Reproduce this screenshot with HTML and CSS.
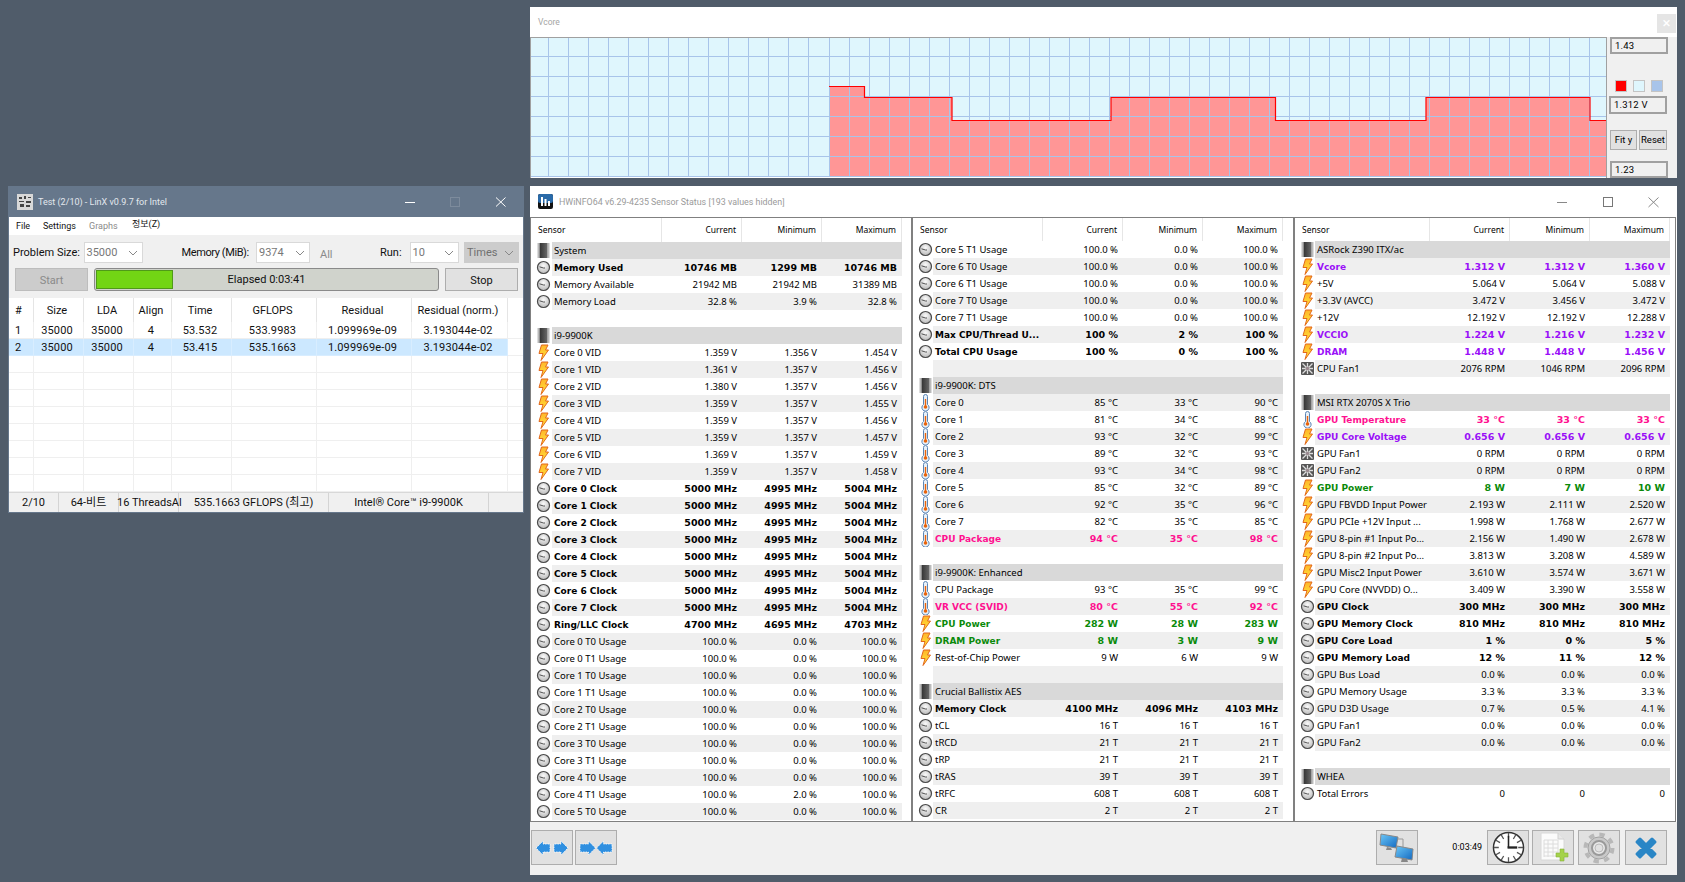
FILE: index.html
```html
<!DOCTYPE html>
<html lang="en">
<head>
<meta charset="utf-8">
<title>LinX and HWiNFO64</title>
<link rel="stylesheet" href="styles.css">
</head>
<body>
<svg class="defs" width="0" height="0" aria-hidden="true">
  <defs>
    <radialGradient id="gaugeFill" cx="50%" cy="35%" r="70%"><stop offset="0" stop-color="#fafafa"/><stop offset="1" stop-color="#b5b5b5"/></radialGradient>
    <linearGradient id="chipFill" x1="0" x2="1" y1="0" y2="0"><stop offset="0" stop-color="#333"/><stop offset="1" stop-color="#6a6a6a"/></linearGradient>
    <linearGradient id="boltFill" x1="0" x2="0" y1="0" y2="1"><stop offset="0" stop-color="#ffb52a"/><stop offset="1" stop-color="#ffe93a"/></linearGradient>
    <linearGradient id="blueFill" x1="0" x2="1" y1="0" y2="1"><stop offset="0" stop-color="#6cc8f8"/><stop offset="1" stop-color="#1268c0"/></linearGradient>
    <symbol id="g" viewBox="0 0 17 17"><circle cx="8.500" cy="8.500" r="6" fill="url(#gaugeFill)" stroke="#4a4a4a" stroke-width="1.200"/><path d="M4.500 7.800L8.500 9H10" fill="none" stroke="#555" stroke-width="1"/></symbol>
    <symbol id="b" viewBox="0 0 17 17"><path d="M6.500 1H13L10.500 6H13.500L6 16.500L8 9.500H4Z" fill="url(#boltFill)" stroke="#e2681c" stroke-width="1" stroke-linejoin="round"/></symbol>
    <symbol id="c" viewBox="0 0 17 17"><rect x="4.500" y="1" width="8" height="15" fill="url(#chipFill)"/><path d="M3.500 1.500V16M13.500 1.500V16" stroke="#777" stroke-width="2" stroke-dasharray="1 1" fill="none"/></symbol>
    <symbol id="t" viewBox="0 0 17 17"><path d="M6.500 2.500a2 2 0 0 1 4 0V10.500a3.600 3.600 0 1 1-4 0Z" fill="#e8f0f8" stroke="#5a84b5" stroke-width="1"/><path d="M8.500 5V13" stroke="#e8640c" stroke-width="1.400"/><circle cx="8.500" cy="13" r="1.800" fill="#e8640c"/></symbol>
    <symbol id="f" viewBox="0 0 17 17"><rect x="2" y="2" width="13" height="13" rx="1" fill="#555"/><path d="M3.500 3.500L13.500 13.500M13.500 3.500L3.500 13.500M8.500 3V14M3 8.500H14" stroke="#ddd" stroke-width="1.300"/><circle cx="8.500" cy="8.500" r="1.800" fill="#9a8a90"/></symbol>
  </defs>
</svg>

<main class="desktop">

  <section class="win vwin">
    <div class="vtitle">Vcore</div>
    <button class="vclose">×</button>
    <div class="vbody">
      <div class="chart">
        <svg class="chart-svg" width="1075" height="139" viewBox="0 0 1075 139">
          <defs>
            <pattern id="gridA" x="17" y="18" width="20" height="20" patternUnits="userSpaceOnUse"><path d="M0 0H20V1H1V20H0Z" fill="#a8c4ea"/></pattern>
            <pattern id="gridB" x="318" y="18" width="20" height="20" patternUnits="userSpaceOnUse"><path d="M0 0H20V1H1V20H0Z" fill="#a8c4ea"/></pattern>
          </defs>
          <rect width="1075" height="139" fill="#dff6fd"/>
          <path d="M298 139V48.500H333.500V59.500H421V82.500H580V59.500H744.500V82.500H895V59.500H1059V82.500H1075V139Z" fill="#ff9696"/>
          <rect x="0" width="297" height="139" fill="url(#gridA)"/>
          <rect x="297" width="778" height="139" fill="url(#gridB)"/>
          <path d="M298 48.500H333.500V59.500H421V82.500H580V59.500H744.500V82.500H895V59.500H1059V82.500H1075" fill="none" stroke="#f00" stroke-width="1.200"/>
        </svg>
      </div>
      <div class="vside">
        <div class="vbox vtop">1.43</div>
        <div class="swatches"><i class="sw red"></i><i class="sw pale"></i><i class="sw blue"></i></div>
        <div class="vbox vcur">1.312 V</div>
        <div class="vbtns"><button class="btn fit">Fit y</button><button class="btn reset">Reset</button></div>
        <div class="vbox vlow">1.23</div>
      </div>
    </div>
  </section>

  <section class="win lx">
    <header class="lx-title">
      <svg class="lx-icon" width="16" height="16" viewBox="0 0 16 16"><rect width="16" height="16" fill="#d8d8d8"/><path d="M2 3h3v2H2zM7 2h2v3H7zM11 3h3v1h-3zM2 7h5v1H2zM9 7h5v2H9zM3 10h4v3H3zM9 11h4v2H9z" fill="#444"/></svg>
      <span class="lx-name">Test (2/10) - LinX v0.9.7 for Intel</span>
      <svg class="wc" width="101" height="12" viewBox="0 0 101 12"><path d="M0 6.500H10" stroke="#fff"/><rect x="45.500" y="1.500" width="9" height="9" fill="none" stroke="#7d8b9c"/><path d="M91 1.500L100.500 10.500M100.500 1.500L91 10.500" stroke="#fff"/></svg>
    </header>
    <nav class="lx-menu"><span>File</span><span>Settings</span><span class="dim">Graphs</span><span class="ko">정보(Z)</span></nav>
    <div class="lx-controls">
      <div class="lx-row1">
        <label class="l-ps">Problem Size:</label>
        <div class="sel s-ps">35000<svg class="chev" width="10" height="6" viewBox="0 0 10 6"><path d="M1 1L5 5L9 1" fill="none" stroke="#888"/></svg></div>
        <label class="l-mem">Memory (MiB):</label>
        <div class="sel s-mem">9374<svg class="chev" width="10" height="6" viewBox="0 0 10 6"><path d="M1 1L5 5L9 1" fill="none" stroke="#888"/></svg></div>
        <span class="all">All</span>
        <label class="l-run">Run:</label>
        <div class="sel s-run">10<svg class="chev" width="10" height="6" viewBox="0 0 10 6"><path d="M1 1L5 5L9 1" fill="none" stroke="#888"/></svg></div>
        <div class="sel s-times">Times<svg class="chev" width="10" height="6" viewBox="0 0 10 6"><path d="M1 1L5 5L9 1" fill="none" stroke="#888"/></svg></div>
      </div>
      <div class="lx-row2">
        <button class="start">Start</button>
        <div class="progress"><div class="fill" style="width:22.6%"></div><span class="ptext">Elapsed 0:03:41</span></div>
        <button class="stop">Stop</button>
      </div>
    </div>
    <table class="res">
      <colgroup><col class="c0"><col class="c1"><col class="c2"><col class="c3"><col class="c4"><col class="c5"><col class="c6"><col class="c7"><col></colgroup>
      <thead><tr><th class="hash">#</th><th>Size</th><th>LDA</th><th>Align</th><th>Time</th><th>GFLOPS</th><th>Residual</th><th>Residual (norm.)</th><th></th></tr></thead>
      <tbody>
        <tr><td class="hash">1</td><td>35000</td><td>35000</td><td>4</td><td>53.532</td><td>533.9983</td><td>1.099969e-09</td><td>3.193044e-02</td><td class="tail"></td></tr>
        <tr class="sel-row"><td class="hash">2</td><td>35000</td><td>35000</td><td>4</td><td>53.415</td><td>535.1663</td><td>1.099969e-09</td><td>3.193044e-02</td><td class="tail"></td></tr>
        <tr><td></td><td></td><td></td><td></td><td></td><td></td><td></td><td></td><td></td></tr>
        <tr><td></td><td></td><td></td><td></td><td></td><td></td><td></td><td></td><td></td></tr>
        <tr><td></td><td></td><td></td><td></td><td></td><td></td><td></td><td></td><td></td></tr>
        <tr><td></td><td></td><td></td><td></td><td></td><td></td><td></td><td></td><td></td></tr>
        <tr><td></td><td></td><td></td><td></td><td></td><td></td><td></td><td></td><td></td></tr>
        <tr><td></td><td></td><td></td><td></td><td></td><td></td><td></td><td></td><td></td></tr>
        <tr><td></td><td></td><td></td><td></td><td></td><td></td><td></td><td></td><td></td></tr>
        <tr><td></td><td></td><td></td><td></td><td></td><td></td><td></td><td></td><td></td></tr>
      </tbody>
    </table>
    <footer class="lx-status">
      <span class="st1">2/10</span><span class="st2">64-비트</span><span class="st3">16 ThreadsAl</span><span class="st4">535.1663 GFLOPS (최고)</span><span class="st5">Intel® Core™ i9-9900K</span><span class="st6"></span>
    </footer>
  </section>

  <section class="win hw">
    <header class="hw-title">
      <svg class="hw-icon" width="15" height="15" viewBox="0 0 15 15"><rect width="15" height="15" rx="2" fill="#111"/><rect width="15" height="9" rx="2" fill="#2a6aa8"/><path d="M3 3h2v9H3zM6.500 5h2v7h-2zM10 7h2v5h-2z" fill="#fff"/></svg>
      <span class="hw-name">HWiNFO64 v6.29-4235 Sensor Status [193 values hidden]</span>
      <svg class="wc hw-wc" width="103" height="12" viewBox="0 0 103 12"><path d="M0 6.500H10" stroke="#888"/><rect x="46.500" y="1.500" width="9" height="9" fill="none" stroke="#777"/><path d="M91.500 1.500L101.500 11M101.500 1.500L91.500 11" stroke="#888"/></svg>
    </header>
    <div class="panels">

      <div class="panel p1">
        <div class="phead"><span>Sensor</span><span>Current</span><span>Minimum</span><span>Maximum</span></div>
        <div class="rows">
          <div class="row grp"><svg class="ic"><use href="#c"/></svg><span class="full">System</span></div>
          <div class="row bold"><svg class="ic"><use href="#g"/></svg><span>Memory Used</span><span>10746 MB</span><span>1299 MB</span><span>10746 MB</span></div>
          <div class="row"><svg class="ic"><use href="#g"/></svg><span>Memory Available</span><span>21942 MB</span><span>21942 MB</span><span>31389 MB</span></div>
          <div class="row"><svg class="ic"><use href="#g"/></svg><span>Memory Load</span><span>32.8 %</span><span>3.9 %</span><span>32.8 %</span></div>
          <div class="row"><span class="full blank"></span></div>
          <div class="row grp"><svg class="ic"><use href="#c"/></svg><span class="full">i9-9900K</span></div>
          <div class="row"><svg class="ic"><use href="#b"/></svg><span>Core 0 VID</span><span>1.359 V</span><span>1.356 V</span><span>1.454 V</span></div>
          <div class="row"><svg class="ic"><use href="#b"/></svg><span>Core 1 VID</span><span>1.361 V</span><span>1.357 V</span><span>1.456 V</span></div>
          <div class="row"><svg class="ic"><use href="#b"/></svg><span>Core 2 VID</span><span>1.380 V</span><span>1.357 V</span><span>1.456 V</span></div>
          <div class="row"><svg class="ic"><use href="#b"/></svg><span>Core 3 VID</span><span>1.359 V</span><span>1.357 V</span><span>1.455 V</span></div>
          <div class="row"><svg class="ic"><use href="#b"/></svg><span>Core 4 VID</span><span>1.359 V</span><span>1.357 V</span><span>1.456 V</span></div>
          <div class="row"><svg class="ic"><use href="#b"/></svg><span>Core 5 VID</span><span>1.359 V</span><span>1.357 V</span><span>1.457 V</span></div>
          <div class="row"><svg class="ic"><use href="#b"/></svg><span>Core 6 VID</span><span>1.369 V</span><span>1.357 V</span><span>1.459 V</span></div>
          <div class="row"><svg class="ic"><use href="#b"/></svg><span>Core 7 VID</span><span>1.359 V</span><span>1.357 V</span><span>1.458 V</span></div>
          <div class="row bold"><svg class="ic"><use href="#g"/></svg><span>Core 0 Clock</span><span>5000 MHz</span><span>4995 MHz</span><span>5004 MHz</span></div>
          <div class="row bold"><svg class="ic"><use href="#g"/></svg><span>Core 1 Clock</span><span>5000 MHz</span><span>4995 MHz</span><span>5004 MHz</span></div>
          <div class="row bold"><svg class="ic"><use href="#g"/></svg><span>Core 2 Clock</span><span>5000 MHz</span><span>4995 MHz</span><span>5004 MHz</span></div>
          <div class="row bold"><svg class="ic"><use href="#g"/></svg><span>Core 3 Clock</span><span>5000 MHz</span><span>4995 MHz</span><span>5004 MHz</span></div>
          <div class="row bold"><svg class="ic"><use href="#g"/></svg><span>Core 4 Clock</span><span>5000 MHz</span><span>4995 MHz</span><span>5004 MHz</span></div>
          <div class="row bold"><svg class="ic"><use href="#g"/></svg><span>Core 5 Clock</span><span>5000 MHz</span><span>4995 MHz</span><span>5004 MHz</span></div>
          <div class="row bold"><svg class="ic"><use href="#g"/></svg><span>Core 6 Clock</span><span>5000 MHz</span><span>4995 MHz</span><span>5004 MHz</span></div>
          <div class="row bold"><svg class="ic"><use href="#g"/></svg><span>Core 7 Clock</span><span>5000 MHz</span><span>4995 MHz</span><span>5004 MHz</span></div>
          <div class="row bold"><svg class="ic"><use href="#g"/></svg><span>Ring/LLC Clock</span><span>4700 MHz</span><span>4695 MHz</span><span>4703 MHz</span></div>
          <div class="row"><svg class="ic"><use href="#g"/></svg><span>Core 0 T0 Usage</span><span>100.0 %</span><span>0.0 %</span><span>100.0 %</span></div>
          <div class="row"><svg class="ic"><use href="#g"/></svg><span>Core 0 T1 Usage</span><span>100.0 %</span><span>0.0 %</span><span>100.0 %</span></div>
          <div class="row"><svg class="ic"><use href="#g"/></svg><span>Core 1 T0 Usage</span><span>100.0 %</span><span>0.0 %</span><span>100.0 %</span></div>
          <div class="row"><svg class="ic"><use href="#g"/></svg><span>Core 1 T1 Usage</span><span>100.0 %</span><span>0.0 %</span><span>100.0 %</span></div>
          <div class="row"><svg class="ic"><use href="#g"/></svg><span>Core 2 T0 Usage</span><span>100.0 %</span><span>0.0 %</span><span>100.0 %</span></div>
          <div class="row"><svg class="ic"><use href="#g"/></svg><span>Core 2 T1 Usage</span><span>100.0 %</span><span>0.0 %</span><span>100.0 %</span></div>
          <div class="row"><svg class="ic"><use href="#g"/></svg><span>Core 3 T0 Usage</span><span>100.0 %</span><span>0.0 %</span><span>100.0 %</span></div>
          <div class="row"><svg class="ic"><use href="#g"/></svg><span>Core 3 T1 Usage</span><span>100.0 %</span><span>0.0 %</span><span>100.0 %</span></div>
          <div class="row"><svg class="ic"><use href="#g"/></svg><span>Core 4 T0 Usage</span><span>100.0 %</span><span>0.0 %</span><span>100.0 %</span></div>
          <div class="row"><svg class="ic"><use href="#g"/></svg><span>Core 4 T1 Usage</span><span>100.0 %</span><span>2.0 %</span><span>100.0 %</span></div>
          <div class="row"><svg class="ic"><use href="#g"/></svg><span>Core 5 T0 Usage</span><span>100.0 %</span><span>0.0 %</span><span>100.0 %</span></div>
        </div>
      </div>

      <div class="panel p2">
        <div class="phead"><span>Sensor</span><span>Current</span><span>Minimum</span><span>Maximum</span></div>
        <div class="rows">
          <div class="row"><svg class="ic"><use href="#g"/></svg><span>Core 5 T1 Usage</span><span>100.0 %</span><span>0.0 %</span><span>100.0 %</span></div>
          <div class="row"><svg class="ic"><use href="#g"/></svg><span>Core 6 T0 Usage</span><span>100.0 %</span><span>0.0 %</span><span>100.0 %</span></div>
          <div class="row"><svg class="ic"><use href="#g"/></svg><span>Core 6 T1 Usage</span><span>100.0 %</span><span>0.0 %</span><span>100.0 %</span></div>
          <div class="row"><svg class="ic"><use href="#g"/></svg><span>Core 7 T0 Usage</span><span>100.0 %</span><span>0.0 %</span><span>100.0 %</span></div>
          <div class="row"><svg class="ic"><use href="#g"/></svg><span>Core 7 T1 Usage</span><span>100.0 %</span><span>0.0 %</span><span>100.0 %</span></div>
          <div class="row bold"><svg class="ic"><use href="#g"/></svg><span>Max CPU/Thread U...</span><span>100 %</span><span>2 %</span><span>100 %</span></div>
          <div class="row bold"><svg class="ic"><use href="#g"/></svg><span>Total CPU Usage</span><span>100 %</span><span>0 %</span><span>100 %</span></div>
          <div class="row"><span class="full blank"></span></div>
          <div class="row grp"><svg class="ic"><use href="#c"/></svg><span class="full">i9-9900K: DTS</span></div>
          <div class="row"><svg class="ic"><use href="#t"/></svg><span>Core 0</span><span>85 °C</span><span>33 °C</span><span>90 °C</span></div>
          <div class="row"><svg class="ic"><use href="#t"/></svg><span>Core 1</span><span>81 °C</span><span>34 °C</span><span>88 °C</span></div>
          <div class="row"><svg class="ic"><use href="#t"/></svg><span>Core 2</span><span>93 °C</span><span>32 °C</span><span>99 °C</span></div>
          <div class="row"><svg class="ic"><use href="#t"/></svg><span>Core 3</span><span>89 °C</span><span>32 °C</span><span>93 °C</span></div>
          <div class="row"><svg class="ic"><use href="#t"/></svg><span>Core 4</span><span>93 °C</span><span>34 °C</span><span>98 °C</span></div>
          <div class="row"><svg class="ic"><use href="#t"/></svg><span>Core 5</span><span>85 °C</span><span>32 °C</span><span>89 °C</span></div>
          <div class="row"><svg class="ic"><use href="#t"/></svg><span>Core 6</span><span>92 °C</span><span>35 °C</span><span>96 °C</span></div>
          <div class="row"><svg class="ic"><use href="#t"/></svg><span>Core 7</span><span>82 °C</span><span>35 °C</span><span>85 °C</span></div>
          <div class="row bold pink"><svg class="ic"><use href="#t"/></svg><span>CPU Package</span><span>94 °C</span><span>35 °C</span><span>98 °C</span></div>
          <div class="row"><span class="full blank"></span></div>
          <div class="row grp"><svg class="ic"><use href="#c"/></svg><span class="full">i9-9900K: Enhanced</span></div>
          <div class="row"><svg class="ic"><use href="#t"/></svg><span>CPU Package</span><span>93 °C</span><span>35 °C</span><span>99 °C</span></div>
          <div class="row bold pink"><svg class="ic"><use href="#t"/></svg><span>VR VCC (SVID)</span><span>80 °C</span><span>55 °C</span><span>92 °C</span></div>
          <div class="row bold green"><svg class="ic"><use href="#b"/></svg><span>CPU Power</span><span>282 W</span><span>28 W</span><span>283 W</span></div>
          <div class="row bold green"><svg class="ic"><use href="#b"/></svg><span>DRAM Power</span><span>8 W</span><span>3 W</span><span>9 W</span></div>
          <div class="row"><svg class="ic"><use href="#b"/></svg><span>Rest-of-Chip Power</span><span>9 W</span><span>6 W</span><span>9 W</span></div>
          <div class="row"><span class="full blank"></span></div>
          <div class="row grp"><svg class="ic"><use href="#c"/></svg><span class="full">Crucial Ballistix AES</span></div>
          <div class="row bold"><svg class="ic"><use href="#g"/></svg><span>Memory Clock</span><span>4100 MHz</span><span>4096 MHz</span><span>4103 MHz</span></div>
          <div class="row"><svg class="ic"><use href="#g"/></svg><span>tCL</span><span>16 T</span><span>16 T</span><span>16 T</span></div>
          <div class="row"><svg class="ic"><use href="#g"/></svg><span>tRCD</span><span>21 T</span><span>21 T</span><span>21 T</span></div>
          <div class="row"><svg class="ic"><use href="#g"/></svg><span>tRP</span><span>21 T</span><span>21 T</span><span>21 T</span></div>
          <div class="row"><svg class="ic"><use href="#g"/></svg><span>tRAS</span><span>39 T</span><span>39 T</span><span>39 T</span></div>
          <div class="row"><svg class="ic"><use href="#g"/></svg><span>tRFC</span><span>608 T</span><span>608 T</span><span>608 T</span></div>
          <div class="row"><svg class="ic"><use href="#g"/></svg><span>CR</span><span>2 T</span><span>2 T</span><span>2 T</span></div>
        </div>
      </div>

      <div class="panel p3">
        <div class="phead"><span>Sensor</span><span>Current</span><span>Minimum</span><span>Maximum</span></div>
        <div class="rows">
          <div class="row grp"><svg class="ic"><use href="#c"/></svg><span class="full">ASRock Z390 ITX/ac</span></div>
          <div class="row bold purple"><svg class="ic"><use href="#b"/></svg><span>Vcore</span><span>1.312 V</span><span>1.312 V</span><span>1.360 V</span></div>
          <div class="row"><svg class="ic"><use href="#b"/></svg><span>+5V</span><span>5.064 V</span><span>5.064 V</span><span>5.088 V</span></div>
          <div class="row"><svg class="ic"><use href="#b"/></svg><span>+3.3V (AVCC)</span><span>3.472 V</span><span>3.456 V</span><span>3.472 V</span></div>
          <div class="row"><svg class="ic"><use href="#b"/></svg><span>+12V</span><span>12.192 V</span><span>12.192 V</span><span>12.288 V</span></div>
          <div class="row bold purple"><svg class="ic"><use href="#b"/></svg><span>VCCIO</span><span>1.224 V</span><span>1.216 V</span><span>1.232 V</span></div>
          <div class="row bold purple"><svg class="ic"><use href="#b"/></svg><span>DRAM</span><span>1.448 V</span><span>1.448 V</span><span>1.456 V</span></div>
          <div class="row"><svg class="ic"><use href="#f"/></svg><span>CPU Fan1</span><span>2076 RPM</span><span>1046 RPM</span><span>2096 RPM</span></div>
          <div class="row"><span class="full blank"></span></div>
          <div class="row grp"><svg class="ic"><use href="#c"/></svg><span class="full">MSI RTX 2070S X Trio</span></div>
          <div class="row bold pink"><svg class="ic"><use href="#t"/></svg><span>GPU Temperature</span><span>33 °C</span><span>33 °C</span><span>33 °C</span></div>
          <div class="row bold purple"><svg class="ic"><use href="#b"/></svg><span>GPU Core Voltage</span><span>0.656 V</span><span>0.656 V</span><span>0.656 V</span></div>
          <div class="row"><svg class="ic"><use href="#f"/></svg><span>GPU Fan1</span><span>0 RPM</span><span>0 RPM</span><span>0 RPM</span></div>
          <div class="row"><svg class="ic"><use href="#f"/></svg><span>GPU Fan2</span><span>0 RPM</span><span>0 RPM</span><span>0 RPM</span></div>
          <div class="row bold green"><svg class="ic"><use href="#b"/></svg><span>GPU Power</span><span>8 W</span><span>7 W</span><span>10 W</span></div>
          <div class="row"><svg class="ic"><use href="#b"/></svg><span>GPU FBVDD Input Power</span><span>2.193 W</span><span>2.111 W</span><span>2.520 W</span></div>
          <div class="row"><svg class="ic"><use href="#b"/></svg><span>GPU PCIe +12V Input ...</span><span>1.998 W</span><span>1.768 W</span><span>2.677 W</span></div>
          <div class="row"><svg class="ic"><use href="#b"/></svg><span>GPU 8-pin #1 Input Po...</span><span>2.156 W</span><span>1.490 W</span><span>2.678 W</span></div>
          <div class="row"><svg class="ic"><use href="#b"/></svg><span>GPU 8-pin #2 Input Po...</span><span>3.813 W</span><span>3.208 W</span><span>4.589 W</span></div>
          <div class="row"><svg class="ic"><use href="#b"/></svg><span>GPU Misc2 Input Power</span><span>3.610 W</span><span>3.574 W</span><span>3.671 W</span></div>
          <div class="row"><svg class="ic"><use href="#b"/></svg><span>GPU Core (NVVDD) O...</span><span>3.409 W</span><span>3.390 W</span><span>3.558 W</span></div>
          <div class="row bold"><svg class="ic"><use href="#g"/></svg><span>GPU Clock</span><span>300 MHz</span><span>300 MHz</span><span>300 MHz</span></div>
          <div class="row bold"><svg class="ic"><use href="#g"/></svg><span>GPU Memory Clock</span><span>810 MHz</span><span>810 MHz</span><span>810 MHz</span></div>
          <div class="row bold"><svg class="ic"><use href="#g"/></svg><span>GPU Core Load</span><span>1 %</span><span>0 %</span><span>5 %</span></div>
          <div class="row bold"><svg class="ic"><use href="#g"/></svg><span>GPU Memory Load</span><span>12 %</span><span>11 %</span><span>12 %</span></div>
          <div class="row"><svg class="ic"><use href="#g"/></svg><span>GPU Bus Load</span><span>0.0 %</span><span>0.0 %</span><span>0.0 %</span></div>
          <div class="row"><svg class="ic"><use href="#g"/></svg><span>GPU Memory Usage</span><span>3.3 %</span><span>3.3 %</span><span>3.3 %</span></div>
          <div class="row"><svg class="ic"><use href="#g"/></svg><span>GPU D3D Usage</span><span>0.7 %</span><span>0.5 %</span><span>4.1 %</span></div>
          <div class="row"><svg class="ic"><use href="#g"/></svg><span>GPU Fan1</span><span>0.0 %</span><span>0.0 %</span><span>0.0 %</span></div>
          <div class="row"><svg class="ic"><use href="#g"/></svg><span>GPU Fan2</span><span>0.0 %</span><span>0.0 %</span><span>0.0 %</span></div>
          <div class="row"><span class="full blank"></span></div>
          <div class="row grp"><svg class="ic"><use href="#c"/></svg><span class="full">WHEA</span></div>
          <div class="row"><svg class="ic"><use href="#g"/></svg><span>Total Errors</span><span>0</span><span>0</span><span>0</span></div>
        </div>
      </div>
    </div>

    <footer class="toolbar">
      <button class="tb"><svg width="34" height="18" viewBox="0 0 34 18"><path d="M1 9L8 2V5H15V13H8V16Z M33 9L26 2V5H19V13H26V16Z" fill="#2f8fe0" stroke="#fff" stroke-width=".8" stroke-dasharray="1.500 1"/></svg></button>
      <button class="tb"><svg width="34" height="18" viewBox="0 0 34 18"><path d="M16.500 9L9.500 2V5H1V13H9.500V16Z M17.500 9L24.500 2V5H33V13H24.500V16Z" fill="#2f8fe0" stroke="#fff" stroke-width=".8" stroke-dasharray="1.500 1"/></svg></button>
      <span class="tb-gap"></span>
      <button class="tb"><svg width="36" height="32" viewBox="0 0 36 32">
        <path d="M14 7H24V17" fill="none" stroke="#999"/>
        <path d="M2 2L19 5L17 16L1 13Z" fill="url(#blueFill)" stroke="#888"/><path d="M8 15L7 18H13L12 16Z" fill="#888"/>
        <path d="M18 14L34 17L33 28L16 25Z" fill="url(#blueFill)" stroke="#888"/><path d="M23 26L22 30H29L28 27Z" fill="#888"/>
      </svg></button>
      <span class="timer">0:03:49</span>
      <button class="tb tb-clock"><svg width="33" height="33" viewBox="0 0 34 34"><circle cx="17" cy="17" r="15.500" fill="#fff" stroke="#333" stroke-width="1.500"/><path d="M17 2V7M17 27V32M2 17H7M27 17H32M9.500 4L12 8.300M24.500 4L22 8.300M4 9.500L8.300 12M30 9.500L25.700 12M4 24.500L8.300 22M30 24.500L25.700 22M9.500 30L12 25.700M24.500 30L22 25.700" stroke="#555" stroke-width="1.300"/><path d="M17 17V5" stroke="#222" stroke-width="1.600"/><path d="M16 17H26" stroke="#222" stroke-width="2.400"/></svg></button>
      <button class="tb tb-doc"><svg width="32" height="32" viewBox="0 0 32 32"><path d="M4 1H21L27 7V28H4Z" fill="#fbfbfb" stroke="#d8d8d8"/><path d="M21 1V7H27" fill="#e8e8e8" stroke="#d0d0d0"/><path d="M7 8H21M7 12H21M7 16H21M7 20H21M7 24H19M11 8V25M16 8V25M21 8V25M7 8V25" stroke="#dcdcdc" fill="none"/><path d="M20 19H24V15H28V19H32V23H28V27H24V23H20Z" transform="translate(-1 2)" fill="#a4d24a" stroke="#86b43a" stroke-width=".6"/></svg></button>
      <button class="tb tb-gear"><svg width="32" height="32" viewBox="0 0 32 32"><circle cx="16" cy="16" r="13.500" fill="none" stroke="#b8b8b8" stroke-width="4" stroke-dasharray="5.300 5.300"/><circle cx="16" cy="16" r="11" fill="#c9c9c9" stroke="#a2a2a2"/><circle cx="16" cy="16" r="7" fill="#e8e8e8" stroke="#9a9a9a" stroke-width="2"/><circle cx="16" cy="16" r="4" fill="#e1e1e1" stroke="#bbb"/></svg></button>
      <button class="tb tb-x"><svg width="24" height="24" viewBox="0 0 24 24"><path d="M6 3L12 9L18 3L21 6L15 12L21 18L18 21L12 15L6 21L3 18L9 12L3 6Z" fill="#2a86c6" stroke="#2a86c6" stroke-width="3" stroke-linejoin="round"/></svg></button>
    </footer>
  </section>
</main>
</body>
</html>
```

FILE: styles.css
```css
* { box-sizing: border-box; }
html, body { margin: 0; padding: 0; }
body { width: 1685px; height: 882px; overflow: hidden; background: #505c6a; }
.defs { position: absolute; }
.desktop { position: relative; width: 1685px; height: 882px; background: #505c6a; }
.win { position: absolute; }
button { font: inherit; padding: 0; margin: 0; color: inherit; }

/* Vcore graph window */
.vwin { left: 530px; top: 7px; width: 1147px; height: 171px; background: #fff; font: 9px Roboto, sans-serif; color: #000; }
.vtitle { height: 30px; padding: 7px 0 0 8px; font-size: 8.5px; line-height: 16px; color: #a5a5a5; }
.vclose { position: absolute; right: 1px; top: 7px; width: 19px; height: 19px; border: 0; background: #e5e5e5; color: #fff; font-size: 15px; line-height: 17px; }
.vbody { display: flex; height: 141px; }
.chart { width: 1077px; height: 141px; border: 1px solid #a0a0a0; border-bottom: 0; }
.chart-svg { display: block; }
.vside { flex: 1; background: #f0f0f0; display: flex; flex-direction: column; align-items: flex-start; }
.vbox { border: 2px solid #a0a0a0; background: #f0f0f0; height: 17px; line-height: 13px; padding-left: 3px; font-size: 9.500px; letter-spacing: .2px; }
.vtop { margin: 0 0 0 3px; width: 58px; }
.swatches { display: flex; gap: 6px; margin: 26px 0 0 8px; }
.sw { display: block; width: 12px; height: 12px; border: 1px solid #c4c4c4; }
.sw.red { background: #f00; }
.sw.pale { background: #dff6fd; }
.sw.blue { background: #a8c4ea; }
.vcur { margin: 4px 0 0 2px; width: 58px; height: 18px; line-height: 14px; }
.vbtns { display: flex; gap: 2px; margin: 16px 0 0 3px; }
.btn { height: 20px; border: 1px solid #adadad; background: #e1e1e1; font-size: 9.500px; line-height: 16px; }
.fit { width: 27px; }
.reset { width: 28px; }
.vlow { margin: 11px 0 0 3px; width: 58px; }

/* LinX window */
.lx { left: 8px; top: 186px; width: 516px; height: 327px; border: 1px solid #66778b; background: #fff; font: 11px Roboto, "Noto Sans CJK KR", sans-serif; color: #111; }
.lx-title { height: 30px; background: #66778b; display: flex; align-items: center; padding: 0 17px 0 8px; }
.lx-icon { flex: none; }
.lx-name { margin-left: 5px; color: #e3e8ee; font-size: 9px; flex: 1; white-space: nowrap; }
.wc { flex: none; }
.lx-menu { height: 18px; background: #fff; display: flex; padding-left: 7px; font-size: 9px; line-height: 18px; }
.lx-menu span { white-space: nowrap; }
.lx-menu span:nth-child(1) { width: 27px; }
.lx-menu span:nth-child(2) { width: 46px; }
.lx-menu span:nth-child(3) { width: 43px; }
.lx-menu .dim { color: #8a8a8a; }
.lx-menu .ko { margin-top: -2px; }
.lx-controls { height: 63px; background: #f0f0f0; padding: 7px 4px 0 4px; }
.lx-row1 { display: flex; align-items: center; height: 21px; }
.lx-row1 label { white-space: nowrap; }
.sel { position: relative; height: 21px; border: 1px solid #d9d9d9; background: #fff; color: #777; line-height: 19px; padding-left: 2px; }
.chev { position: absolute; right: 4px; top: 7px; }
.l-ps { width: 70.500px; }
.s-ps { width: 59px; }
.l-mem { margin-left: 39px; width: 74.500px; letter-spacing: -.4px; }
.s-mem { width: 54px; }
.all { margin-left: 10px; width: 60px; padding-top: 3px; color: #8a8a8a; }
.l-run { width: 29.500px; }
.s-run { width: 49.500px; }
.s-times { margin-left: 5px; width: 55px; background: #ccc; border-color: #ccc; color: #707070; }
.lx-row2 { display: flex; margin-top: 5px; height: 23px; padding-left: 2px; }
.start { width: 73px; border: 1px solid #bdbdbd; background: #ccc; color: #8a8a8a; padding-top: 1px; }
.progress { position: relative; margin-left: 6px; width: 345px; border: 1px solid #8a8a8a; border-radius: 3px; background: #d0d3cc; padding: 1px; }
.fill { height: 100%; background: #72d514; border: 1px solid #4f9a18; }
.ptext { position: absolute; left: 0; right: 0; top: 0; bottom: 0; text-align: center; line-height: 22px; }
.stop { margin-left: 6px; width: 73px; border: 1px solid #adadad; background: #e1e1e1; padding-top: 1px; }
.res { width: 514px; table-layout: fixed; border-collapse: separate; border-spacing: 0; background: #fff; }
.c0 { width: 25px; } .c1 { width: 50px; } .c2 { width: 50px; } .c3 { width: 38px; }
.c4 { width: 60px; } .c5 { width: 85px; } .c6 { width: 95px; } .c7 { width: 96px; }
.res th { height: 24px; padding: 0 3px 0 0; font-weight: normal; border-right: 1px solid #e5e5e5; white-space: nowrap; }
.res th:last-child { border-right: 0; }
.res td { box-sizing: content-box; height: 14px; padding: 2px 3px 0 0; line-height: 14px; letter-spacing: .15px; text-align: center; border-right: 1px solid #efefef; border-bottom: 1px solid #efefef; white-space: nowrap; overflow: hidden; }
.res td:last-child { border-right: 0; }
.res .hash { text-align: left; padding-left: 6px; }
.sel-row td { background: #cce8ff; border-color: #d8edff; }
.sel-row td.tail { background: #fff; border-color: #efefef; }
.lx-status { height: 20px; background: #f0f0f0; border-top: 1px solid #d8d8d8; display: flex; line-height: 19px; }
.lx-status span { border-right: 1px solid #d4d4d4; text-align: center; white-space: nowrap; }
.st1 { width: 50px; } .st2 { width: 60px; } .st3 { width: 60px; text-align: left !important; text-indent: -2px; } .st4 { width: 150px; } .st5 { width: 160px; } .st6 { flex: 1; border-right: 0 !important; }

/* HWiNFO window */
.hw { left: 530px; top: 186px; width: 1147px; height: 689px; background: #f0f0f0; font: 9.500px "Noto Sans", sans-serif; color: #000; display: flex; flex-direction: column; }
.hw-title { height: 31px; flex: none; background: #fff; display: flex; align-items: center; padding: 0 17px 0 8px; font-family: Roboto, sans-serif; }
.hw-name { margin-left: 6px; color: #9a9a9a; font-size: 8.900px; flex: 1; white-space: nowrap; }
.panels { display: flex; height: 605px; flex: none; background: #fff; }
.panel { width: 382px; height: 605px; border: 1px solid #808080; background: #fff; overflow: hidden; }
.p1 { --cols: 21px 110px 80px 80px 80px; --head: 24px; }
.p2 { --cols: 20px 110px 80px 80px 80px; --head: 23px; }
.p3 { --cols: 20px 115px 80px 80px 80px; --head: 23px; }
.phead { display: grid; grid-template-columns: var(--cols); height: var(--head); line-height: var(--head); font-size: 8.500px; }
.phead span { text-align: right; padding-right: 5px; border-right: 1px solid #e6e6e6; }
.phead span:first-child { grid-column: 1 / 3; text-align: left; padding-left: 7px; }
.row { display: grid; grid-template-columns: var(--cols); height: 17px; line-height: 17px; white-space: nowrap; }
.row span { display: block; overflow: hidden; text-align: right; padding-right: 5px; }
.row span:nth-of-type(1) { text-align: left; padding-left: 2px; padding-right: 0; }
.row .full { grid-column: 2 / -1; }
.row .blank { grid-column: 1 / -1; margin-left: 21px; }
.p2 .row .blank, .p3 .row .blank { margin-left: 20px; }
.ic { display: block; width: 17px; height: 17px; margin-left: 4px; overflow: visible; }
.rows .row:nth-child(even) span { background: #efefef; }
.rows .row.grp span, .rows .row.grp:nth-child(even) span { background: #d9d9d9; }
.bold { font-family: "DejaVu Sans", sans-serif; font-weight: 700; font-size: 9px; line-height: 18px; }
.bold span:not(:nth-of-type(1)) { font-size: 9.500px; }
.pink { color: #ff1090; }
.purple { color: #9a10f8; }
.green { color: #0a8a0a; }

.toolbar { flex: 1; display: flex; align-items: flex-start; padding: 8px 0 0 1px; background: #f0f0f0; }
.tb { width: 42px; height: 35px; border: 1px solid #adadad; background: #e1e1e1; display: flex; align-items: center; justify-content: center; margin-right: 2px; flex: none; overflow: hidden; }
.tb-gap { width: 757px; flex: none; }
.timer { width: 65px; padding-right: 3px; text-align: right; font-size: 9px; font-family: Roboto, sans-serif; line-height: 34px; flex: none; margin-right: 2px; }
.tb-clock { margin-right: 3px; }
.tb-doc { margin-right: 4px; }
.tb-gear { margin-right: 5px; }
```
